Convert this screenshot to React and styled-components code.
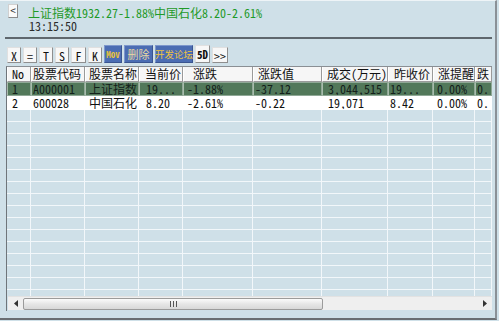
import React from "react";
import styled, { createGlobalStyle } from "styled-components";

const Global = createGlobalStyle`
  html, body { margin: 0; padding: 0; background: #cfe0e8; }
  body { width: 499px; height: 321px; overflow: hidden; }
  * { box-sizing: border-box; }
`;

const FONT = `"Noto Sans Mono CJK SC", "Liberation Mono", "Noto Sans CJK SC", monospace`;

const Frame = styled.div`
  width: 497px;
  height: 320px;
  background: #cfe0e8;
  border-top: 1px solid #eef4f7;
  border-right: 2px solid #8a9096;
  border-bottom: 2px solid #6a6e72;
  font-family: ${FONT};
  font-size: 12px;
  display: flex;
  flex-direction: column;
`;

const Head = styled.div`
  display: grid;
  grid-template-columns: 20px 1fr;
  padding: 3px 0 0 8px;
  height: 36px;
`;

const BackBtn = styled.div`
  width: 10px;
  height: 14px;
  background: #fafafa;
  border: 1px solid #8a8a8a;
  border-top-color: #d0d0d0;
  border-left-color: #d0d0d0;
  font-size: 11px;
  line-height: 11px;
  text-align: center;
  color: #333;
`;

const Quote = styled.div`
  display: flex;
  flex-direction: column;
  line-height: 13px;
  padding-top: 2px;
`;

const Ticker = styled.div`
  color: #1f9a28;
  white-space: nowrap;
`;

const Clock = styled.div`
  color: #2a2a2a;
  padding-left: 1px;
`;

const Separator = styled.div`
  margin-left: 5px;
  width: 487px;
  height: 2px;
  background: #5f676d;
`;

const Toolbar = styled.div`
  display: flex;
  align-items: flex-end;
  gap: 2px;
  padding-left: 7px;
  height: 24px;
`;

const variants = {
  plain: { bg: "#f7f7f7", fg: "#111", dark: "#8e8e8e", light: "#e0e0e0", h: 16 },
  tall: { bg: "#f7f7f7", fg: "#111", dark: "#8e8e8e", light: "#e0e0e0", h: 18 },
  blue: { bg: "#4b6db3", fg: "#e9c84c", dark: "#3a5590", light: "#7d97cc", h: 18 },
};

const Btn = styled.div`
  width: ${(p) => p.$w}px;
  height: ${(p) => variants[p.$v].h}px;
  display: flex;
  align-items: center;
  justify-content: center;
  font-size: ${(p) => p.$fs}px;
  font-weight: ${(p) => (p.$bold ? 700 : 400)};
  white-space: nowrap;
  background: ${(p) => variants[p.$v].bg};
  color: ${(p) => p.$fg || variants[p.$v].fg};
  border: 1px solid ${(p) => variants[p.$v].dark};
  border-top-color: ${(p) => variants[p.$v].light};
  border-left-color: ${(p) => variants[p.$v].light};
`;

const Grid = styled.div`
  margin: 3px 0 0 6px;
  width: 486px;
  height: 245px;
  border-top: 1px solid #8a8f94;
  border-left: 1px solid #6f757a;
  display: flex;
  flex-direction: column;
  overflow: hidden;
`;

const Row = styled.div`
  display: flex;
  height: ${(p) => p.$h}px;
  flex-shrink: 0;
`;

const HeadCell = styled.div`
  width: ${(p) => p.$w}px;
  padding-left: ${(p) => p.$pad}px;
  background: #f6f6f6;
  color: #111;
  border-right: 1px solid #9a9a9a;
  border-bottom: 1px solid #9a9a9a;
  border-left: 1px solid #ffffff;
  line-height: 14px;
  white-space: nowrap;
  overflow: hidden;
`;

const Cell = styled.div`
  width: ${(p) => p.$w}px;
  padding-left: ${(p) => p.$pad}px;
  background: ${(p) => (p.$sel ? "#52785a" : "#ffffff")};
  color: ${(p) => (p.$sel ? "#13201a" : "#111")};
  border: 1px solid ${(p) => (p.$sel ? "#8fa896" : "#ffffff")};
  border-left-color: ${(p) => (p.$sel ? "#a8bcac" : "#ffffff")};
  line-height: 12px;
  white-space: nowrap;
  overflow: hidden;
`;

const EmptyCell = styled.div`
  width: ${(p) => p.$w}px;
  background: #cfe0e8;
  border-right: 1px solid #f2f7fa;
  border-bottom: 1px solid #f2f7fa;
`;

const Filler = styled.div`
  flex: 1;
  display: flex;
  flex-direction: column;
  overflow: hidden;
`;

const ScrollBar = styled.div`
  height: 14px;
  margin-left: 1px;
  width: 484px;
  background: #efefef;
  border-top: 1px solid #e2e2e2;
  display: flex;
  align-items: center;
  flex-shrink: 0;
`;

const Arrow = styled.div`
  width: 15px;
  height: 13px;
  display: flex;
  align-items: center;
  justify-content: center;
`;

const Track = styled.div`
  flex: 1;
  height: 13px;
  display: flex;
  align-items: center;
`;

const Thumb = styled.div`
  width: 300px;
  height: 12px;
  border: 1px solid #9b9b9b;
  border-radius: 2px;
  background: linear-gradient(#fbfbfb, #e6e6e6 50%, #d8d8d8);
  display: flex;
  align-items: center;
  justify-content: center;
  gap: 2px;
`;

const Grip = styled.span`
  width: 1px;
  height: 6px;
  background: #555;
`;

const BottomGap = styled.div`
  height: 1px;
  flex-shrink: 0;
`;

const cols = [
  { t: "No", w: 24, hp: 4, dp: 4 },
  { t: "股票代码", w: 54, hp: 1, dp: 1 },
  { t: "股票名称", w: 54, hp: 3, dp: 3 },
  { t: "当前价", w: 44, hp: 5, dp: 6 },
  { t: "涨跌", w: 70, hp: 9, dp: 3 },
  { t: "涨跌值", w: 69, hp: 4, dp: 1 },
  { t: "成交(万元)", w: 66, hp: 4, dp: 5 },
  { t: "昨收价", w: 45, hp: 5, dp: 1 },
  { t: "涨提醒", w: 42, hp: 4, dp: 3 },
  { t: "跌", w: 17, hp: 1, dp: 1 },
];

const rows = [
  ["1", "A000001", "上证指数", "19...", "-1.88%", "-37.12", "3,044,515", "19...", "0.00%", "0."],
  ["2", "600028", "中国石化", "8.20", "-2.61%", "-0.22", "19,071", "8.42", "0.00%", "0."],
];

const buttons = [
  { t: "X", w: 14, v: "plain", fs: 12 },
  { t: "=", w: 14, v: "plain", fs: 12 },
  { t: "T", w: 14, v: "plain", fs: 12 },
  { t: "S", w: 14, v: "plain", fs: 12 },
  { t: "F", w: 15, v: "plain", fs: 12 },
  { t: "K", w: 14, v: "plain", fs: 12 },
  { t: "Mov", w: 18, v: "blue", fs: 9, bold: true, fg: "#e8c23a" },
  { t: "删除", w: 29, v: "blue", fs: 11, fg: "#ead9a2" },
  { t: "开发论坛", w: 38, v: "blue", fs: 9.5, fg: "#f0c43c" },
  { t: "5D", w: 15, v: "tall", fs: 11, bold: true },
  { t: ">>", w: 16, v: "plain", fs: 12 },
];

export default function App() {
  return (
    <>
      <Global />
      <Frame>
        <Head>
          <BackBtn>&lt;</BackBtn>
          <Quote>
            <Ticker>上证指数1932.27-1.88%中国石化8.20-2.61%</Ticker>
            <Clock>13:15:50</Clock>
          </Quote>
        </Head>
        <Separator />
        <Toolbar>
          {buttons.map((b) => (
            <Btn key={b.t} $w={b.w} $v={b.v} $fs={b.fs} $bold={b.bold} $fg={b.fg}>
              {b.t}
            </Btn>
          ))}
        </Toolbar>
        <Grid>
          <Row $h={15}>
            {cols.map((c) => (
              <HeadCell key={c.t} $w={c.w} $pad={c.hp}>{c.t}</HeadCell>
            ))}
          </Row>
          {rows.map((r, i) => (
            <Row key={i} $h={14}>
              {r.map((v, j) => (
                <Cell key={j} $w={cols[j].w} $pad={cols[j].dp} $sel={i === 0}>{v}</Cell>
              ))}
            </Row>
          ))}
          <Filler>
            {Array.from({ length: 16 }).map((_, i) => (
              <Row key={i} $h={12}>
                {cols.map((c) => (
                  <EmptyCell key={c.t} $w={c.w} />
                ))}
              </Row>
            ))}
          </Filler>
          <ScrollBar>
            <Arrow>
              <svg width="4" height="7" viewBox="0 0 4 7"><path d="M4 0 L0 3.5 L4 7 Z" fill="#333" /></svg>
            </Arrow>
            <Track>
              <Thumb>
                <Grip /><Grip /><Grip />
              </Thumb>
            </Track>
            <Arrow>
              <svg width="4" height="7" viewBox="0 0 4 7"><path d="M0 0 L4 3.5 L0 7 Z" fill="#333" /></svg>
            </Arrow>
          </ScrollBar>
          <BottomGap />
        </Grid>
      </Frame>
    </>
  );
}
